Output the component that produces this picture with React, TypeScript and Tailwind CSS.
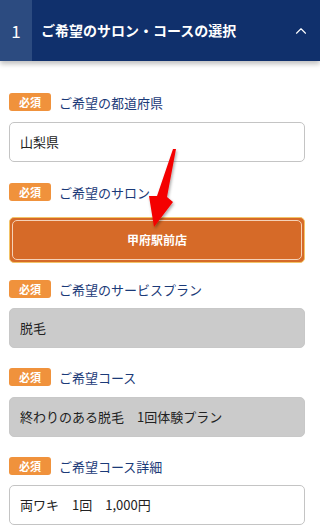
import { ChevronUp } from 'lucide-react';

const jp = { fontFamily: '"Noto Sans CJK JP", "Noto Sans", sans-serif' };

function Badge() {
  return (
    <span className="inline-flex h-[18px] w-[42px] items-center justify-center rounded-[3px] bg-[#f0923c] text-[11px] font-bold leading-none text-white">
      必須
    </span>
  );
}

function Label({ text, className }: { text: string; className?: string }) {
  return (
    <div className={`flex items-center gap-[8px] ${className ?? ''}`}>
      <Badge />
      <span className="text-[13px] leading-none text-[#1b3a78]">{text}</span>
    </div>
  );
}

function Field({ value, gray, className }: { value: string; gray?: boolean; className?: string }) {
  return (
    <div
      className={`flex h-[40px] w-[296px] items-center rounded-[5px] border px-[10px] text-[13px] text-[#222] ${
        gray ? 'border-[#c8c8c8] bg-[#cbcbcb]' : 'border-[#c4c4c4] bg-white'
      } ${className ?? ''}`}
    >
      {value}
    </div>
  );
}

export default function App() {
  return (
    <div className="relative h-[529px] w-[320px] overflow-hidden bg-white" style={jp}>
      {/* Header */}
      <div className="flex h-[61px] items-stretch bg-[#10306c] shadow-[0_3px_5px_rgba(0,0,0,0.25)]">
        <div className="flex w-[32px] items-center justify-center bg-[#2c4b80] text-[17px] text-white">1</div>
        <div className="flex flex-1 items-center pl-[9px] text-[14px] font-bold text-white">
          ご希望のサロン・コースの選択
        </div>
        <div className="flex items-center pr-[10px]">
          <ChevronUp className="h-[18px] w-[18px] text-white" strokeWidth={1.5} />
        </div>
      </div>

      {/* Form */}
      <div className="flex flex-col pl-[9px]">
        <Label text="ご希望の都道府県" className="mt-[32px]" />
        <Field value="山梨県" className="mt-[11px]" />

        <Label text="ご希望のサロン" className="mt-[21px]" />
        <button className="mt-[16px] flex h-[46px] w-[296px] items-center justify-center rounded-[5px] border border-[#f3c466] bg-[#d66a28] p-[2px]">
          <span className="flex h-full w-full items-center justify-center rounded-[5px] border border-[#f5d2b8] text-[12px] font-bold text-white">
            甲府駅前店
          </span>
        </button>

        <Label text="ご希望のサービスプラン" className="mt-[17px]" />
        <Field value="脱毛" gray className="mt-[10px]" />

        <Label text="ご希望コース" className="mt-[20px]" />
        <Field value="終わりのある脱毛　1回体験プラン" gray className="mt-[11px]" />

        <Label text="ご希望コース詳細" className="mt-[20px]" />
        <Field value="両ワキ　1回　1,000円" className="mt-[10px]" />
      </div>

      {/* Red arrow annotation */}
      <svg className="pointer-events-none absolute left-0 top-0" width="320" height="529">
        <defs>
          <filter id="sh" x="-50%" y="-50%" width="200%" height="200%">
            <feDropShadow dx="1" dy="2" stdDeviation="1.5" floodColor="#000" floodOpacity="0.35" />
          </filter>
        </defs>
        <polygon
          points="176,149 167,197 173,202 154,227 149,196 157,196 173,149"
          fill="#f40000"
          filter="url(#sh)"
        />
      </svg>
    </div>
  );
}
